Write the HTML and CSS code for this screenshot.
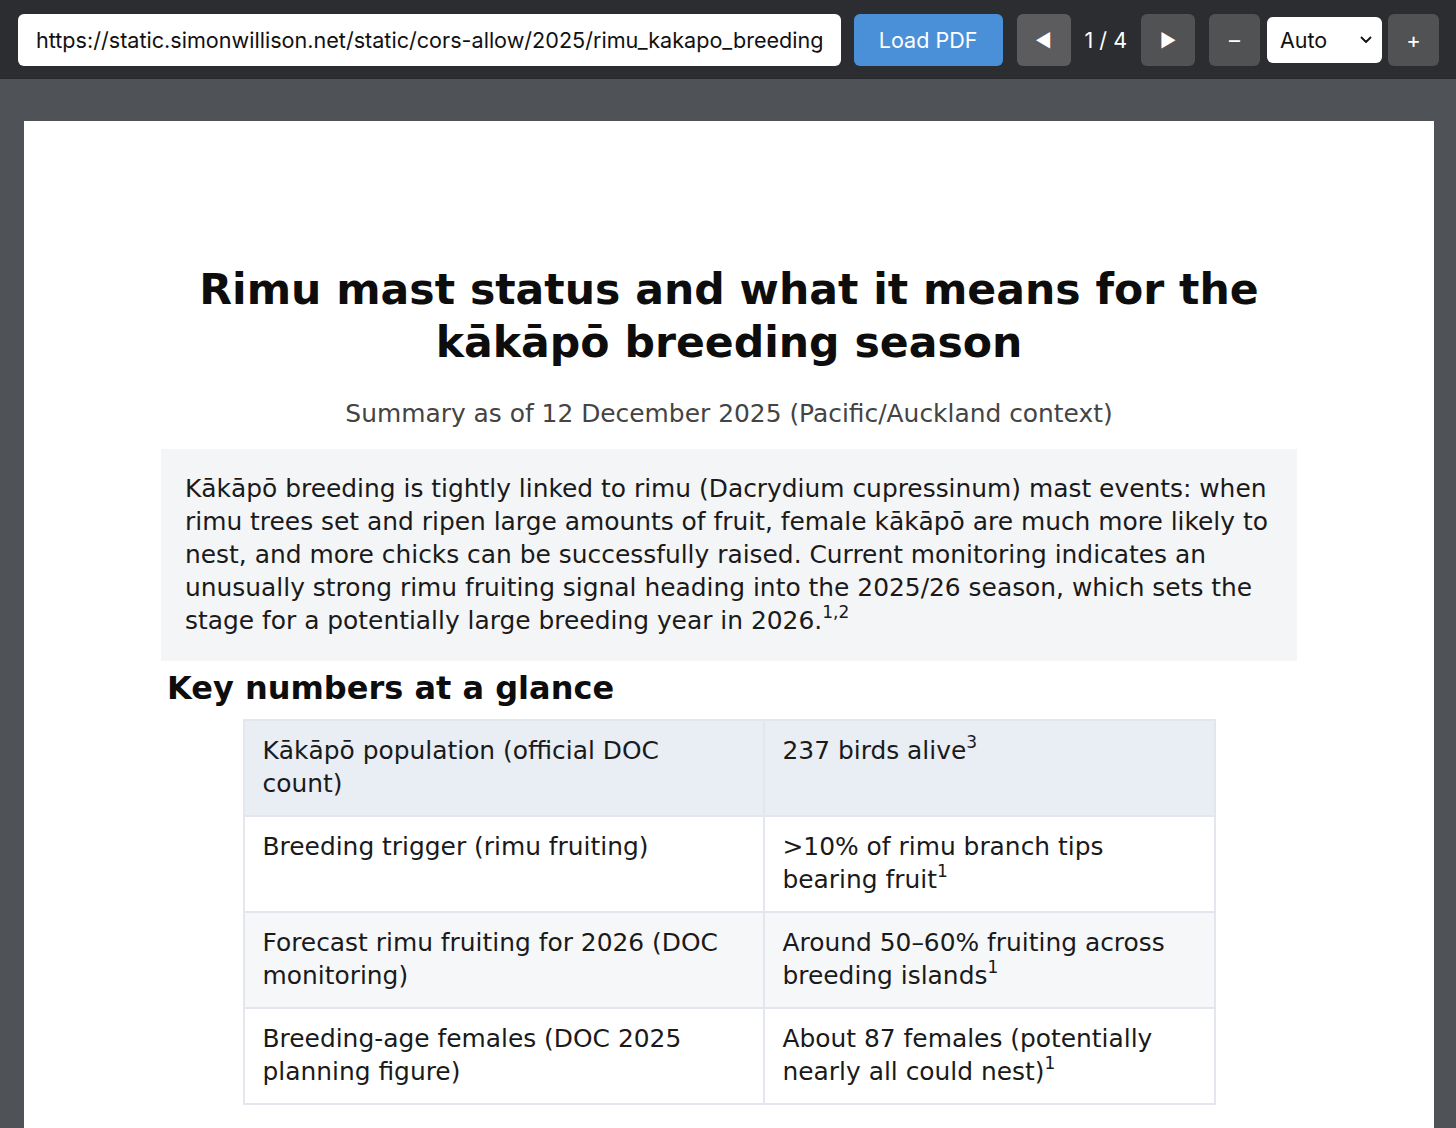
FILE: index.html
```html
<!DOCTYPE html>
<html>
<head>
<meta charset="utf-8">
<title>PDF viewer</title>
<link rel="stylesheet" href="styles.css">
</head>
<body>

<div class="toolbar">
  <input class="url-input" type="text" value="https://static.simonwillison.net/static/cors-allow/2025/rimu_kakapo_breeding.pdf">
  <button class="btn-load">Load PDF</button>
  <button class="btn-tool btn-prev">&#9664;</button>
  <span class="page-num">1 / 4</span>
  <button class="btn-tool">&#9654;</button>
  <div class="zoom-group">
    <button class="btn-tool btn-zoom">&ndash;</button>
    <div class="select-wrap">
      <select class="zoom-select">
        <option>Auto</option>
        <option>50%</option>
        <option>100%</option>
        <option>150%</option>
      </select>
      <svg class="chevron" width="12" height="8" viewBox="0 0 12 8"><path d="M1.5 1.5 L6 6 L10.5 1.5" fill="none" stroke="#111" stroke-width="1.8" stroke-linecap="round" stroke-linejoin="round"/></svg>
    </div>
    <button class="btn-tool btn-zoom">+</button>
  </div>
</div>

<div class="viewer">
  <div class="pdf-page">
    <h1 class="doc-title">Rimu mast status and what it means for the kākāpō breeding season</h1>
    <p class="doc-sub">Summary as of 12 December 2025 (Pacific/Auckland context)</p>

    <div class="summary">
      Kākāpō breeding is tightly linked to rimu (Dacrydium cupressinum) mast events: when
      rimu trees set and ripen large amounts of fruit, female kākāpō are much more likely to
      nest, and more chicks can be successfully raised. Current monitoring indicates an
      unusually strong rimu fruiting signal heading into the 2025/26 season, which sets the
      stage for a potentially large breeding year in 2026.<sup>1,2</sup>
    </div>

    <h2 class="doc-h2">Key numbers at a glance</h2>

    <table class="numbers">
      <tr class="head-row">
        <td class="c1">Kākāpō population (official DOC count)</td>
        <td>237 birds alive<sup>3</sup></td>
      </tr>
      <tr>
        <td class="c1">Breeding trigger (rimu fruiting)</td>
        <td>&gt;10% of rimu branch tips bearing fruit<sup>1</sup></td>
      </tr>
      <tr class="alt">
        <td class="c1">Forecast rimu fruiting for 2026 (DOC monitoring)</td>
        <td>Around 50–60% fruiting across breeding islands<sup>1</sup></td>
      </tr>
      <tr>
        <td class="c1">Breeding-age females (DOC 2025 planning figure)</td>
        <td>About 87 females (potentially nearly all could nest)<sup>1</sup></td>
      </tr>
    </table>
  </div>
</div>

</body>
</html>
```

FILE: styles.css
```css
html, body {
    margin: 0;
    padding: 0;
    height: 100%;
    overflow: hidden;
}

body {
    background: #4f5358;
    font-family: Inter, "Liberation Sans", sans-serif;
}

/* top toolbar */
.toolbar {
    display: flex;
    align-items: center;
    height: 79px;
    box-sizing: border-box;
    padding: 2px 17px 0 18px;
    background: #2b2d31;
    border-bottom: 1px solid #26282b;
}

.url-input {
    width: 823px;
    height: 52px;
    box-sizing: border-box;
    padding: 0 18px;
    border: none;
    border-radius: 6px;
    background: #fff;
    color: #111;
    font-family: Inter, "Liberation Sans", sans-serif;
    font-size: 21.6px;
    outline: none;
}

.btn-load {
    margin-left: 13px;
    width: 149px;
    height: 52px;
    border: none;
    border-radius: 6px;
    background: #4a90d9;
    color: #fff;
    font-family: Inter, "Liberation Sans", sans-serif;
    font-size: 21.5px;
}

.btn-tool {
    width: 54px;
    height: 52px;
    padding: 0;
    border: none;
    border-radius: 6px;
    background: #515254;
    color: #fff;
    font-family: Inter, "Liberation Sans", sans-serif;
    font-size: 18px;
}

.btn-prev {
    margin-left: 14px;
    background: #5c5c5e;
}

.page-num {
    margin: 0 14px;
    color: #fff;
    font-size: 21.5px;
}

.zoom-group {
    display: flex;
    align-items: center;
    margin-left: 14px;
}

.btn-zoom {
    width: 51px;
    font-size: 22px;
}

.select-wrap {
    position: relative;
    margin: 0 6px 0 7px;
}

.zoom-select {
    display: block;
    width: 115px;
    height: 46px;
    padding: 0 0 0 13px;
    border: none;
    border-radius: 6px;
    background: #fff;
    color: #111;
    font-family: Inter, "Liberation Sans", sans-serif;
    font-size: 21.5px;
    -webkit-appearance: none;
    appearance: none;
}

.chevron {
    position: absolute;
    right: 10px;
    top: 19px;
    pointer-events: none;
}

/* viewer area */
.viewer {
    padding: 42px 22px 0 24px;
}

.pdf-page {
    background: #fff;
    padding: 142px 137px 60px 137px;
    min-height: 1200px;
    font-family: "DejaVu Sans", sans-serif;
    color: #1a1a1a;
}

.doc-title {
    margin: 0;
    text-align: center;
    font-size: 42.6px;
    line-height: 53px;
    color: #0d0d0d;
}

.doc-sub {
    margin: 28px 0 19px 0;
    text-align: center;
    font-size: 24.9px;
    line-height: 33px;
    color: #444;
}

.summary {
    background: #f4f5f7;
    padding: 23px 24px 24px 24px;
    font-size: 24.9px;
    line-height: 33px;
}

sup {
    font-size: 17px;
    line-height: 0;
    vertical-align: 11px;
}

.doc-h2 {
    margin: 8px 0 12px 6px;
    font-size: 32px;
    line-height: 38px;
    color: #0d0d0d;
}

.numbers {
    width: 973px;
    margin: 0 auto;
    border-collapse: collapse;
    border: 2px solid #dfe3ea;
    font-size: 24.9px;
    line-height: 33px;
}

.numbers td {
    height: 95px;
    box-sizing: border-box;
    padding: 13px 18px 15px 18px;
    border: 2px solid #e3e7ed;
    vertical-align: top;
}

.numbers .c1 {
    width: 520px;
}

.head-row td {
    background: #e9edf4;
}

.alt td {
    background: #f6f7f9;
}
```
